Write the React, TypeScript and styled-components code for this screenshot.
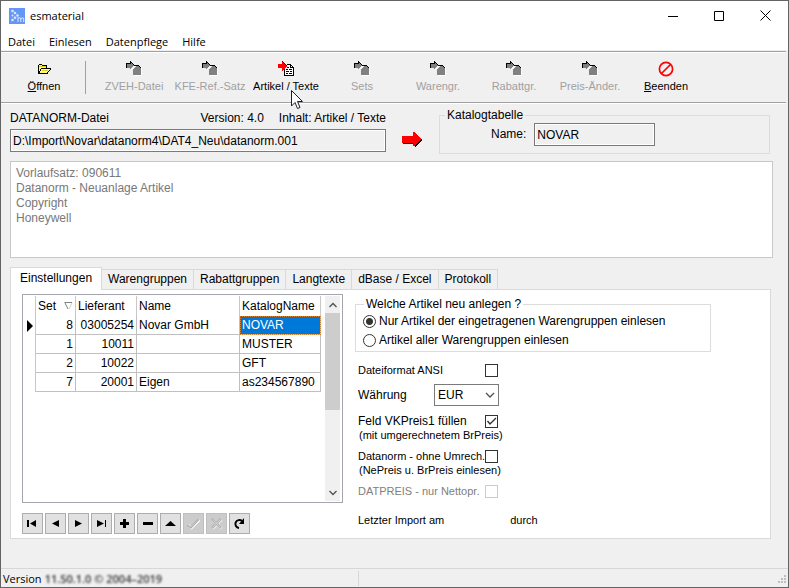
import React, { useState } from "react";
import styled, { createGlobalStyle, css } from "styled-components";

const GlobalStyle = createGlobalStyle`
  *, *::before, *::after { box-sizing: border-box; }
  body {
    margin: 0;
    background: #f0f0f0;
    color: #000;
    font-family: "Liberation Sans", Arial, sans-serif;
    font-size: 12px;
    line-height: 15px;
  }
  button, input, select { font: inherit; color: inherit; margin: 0; }
`;

const Window = styled.div`
  min-height: 100vh;
  display: flex;
  flex-direction: column;
  border: 1px solid #646464;
  background: #f0f0f0;
`;

const TitleBar = styled.header`
  display: flex;
  align-items: center;
  height: 29px;
  padding-left: 8px;
  background: #fff;
  font-family: "Open Sans", sans-serif;
  font-size: 11px;
`;

const Title = styled.h1`
  flex: 1;
  margin: 0 0 0 5px;
  font-size: 11px;
  font-weight: 400;
`;

const CaptionButton = styled.button`
  display: grid;
  place-items: center;
  width: 46px;
  height: 28px;
  padding: 0;
  border: 0;
  background: transparent;
`;

const MenuBar = styled.nav`
  display: flex;
  gap: 14px;
  height: 20px;
  padding: 3px 7px 0;
  background: #fff;
  font-family: "Open Sans", sans-serif;
  font-size: 11px;
`;

const MenuItem = styled.button`
  padding: 0;
  border: 0;
  background: transparent;
  line-height: 16px;
`;

const ToolBar = styled.div`
  display: flex;
  align-items: center;
  height: 52px;
  margin: 1px 2px 0 0;
  padding-left: 5px;
  border-top: 1px solid #a0a0a0;
  border-bottom: 1px solid #a0a0a0;
  box-shadow: inset 0 1px #fff, 0 1px #fff;
`;

const ToolButton = styled.button`
  position: relative;
  display: flex;
  flex-direction: column;
  align-items: center;
  gap: 2px;
  width: 76px;
  padding: 0;
  border: 0;
  background: transparent;
  font-size: 11px;
  line-height: 15px;
  white-space: nowrap;
  &:disabled { color: #a0a0a0; }
  svg { display: block; }
`;

const Pointer = styled.svg`
  position: absolute;
  left: 43px;
  top: 29px;
  z-index: 2;
`;

const ToolSeparator = styled.span`
  width: 1px;
  height: 33px;
  margin: 0 10px 0 3px;
  background: #a0a0a0;
`;

const Source = styled.section`
  display: flex;
  align-items: flex-start;
  padding: 8px 18px 0 9px;
`;

const FileColumn = styled.div`
  width: 376px;
`;

const FileLabels = styled.div`
  display: flex;
  align-items: flex-start;
  justify-content: space-between;
  height: 18px;
`;

const FileInfo = styled.div`
  display: flex;
  gap: 15px;
`;

const ReadField = styled.input<{ $width?: number }>`
  width: ${(p) => (p.$width ? `${p.$width}px` : "100%")};
  height: 23px;
  padding: 0 2px;
  border: 1px solid #7a7a7a;
  box-shadow: inset 0 0 0 1px #fff;
  background: #f0f0f0;
  outline: 0;
`;

const ArrowSlot = styled.div`
  width: 53px;
  padding: 20px 0 0 16px;
  svg { display: block; }
`;

const Group = styled.fieldset`
  flex: 1;
  min-width: 0;
  margin: 0;
  border: 1px solid #dcdcdc;
`;

const GroupLegend = styled.legend`
  padding: 0 2px;
`;

const CatalogGroup = styled(Group)`
  height: 46px;
  margin-top: -3px;
  padding: 0 0 0 51px;
  ${GroupLegend} { margin-left: -46px; }
`;

const NameRow = styled.label`
  display: flex;
  align-items: center;
  gap: 8px;
`;

const Memo = styled.section`
  height: 97px;
  margin: 7px 15px 0 9px;
  padding: 4px 5px;
  border: 1px solid #c8c8c8;
  background: #fff;
  color: #787878;
  line-height: 15px;
`;

const TabStrip = styled.div`
  display: flex;
  align-items: flex-end;
  height: 31px;
  margin: 0 17px 0 9px;
`;

const Tab = styled.button<{ $active: boolean }>`
  height: 20px;
  padding: 0 6px;
  border: 1px solid #d9d9d9;
  border-left-width: 0;
  border-bottom: 0;
  background: #f0f0f0;
  white-space: nowrap;
  ${(p) =>
    p.$active &&
    css`
      position: relative;
      z-index: 1;
      height: 23px;
      margin-bottom: -1px;
      padding: 0 9px 2px;
      border-left-width: 1px;
      background: #fff;
    `}
`;

const TabPanel = styled.main`
  flex: 1;
  display: flex;
  align-items: stretch;
  margin: 0 17px 29px 9px;
  padding: 4px 59px 4px 11px;
  border: 1px solid #d9d9d9;
  background: #fff;
`;

const GridColumn = styled.div`
  display: flex;
  flex-direction: column;
  width: 321px;
  margin-right: 12px;
`;

const GridFrame = styled.div`
  flex: 1;
  display: flex;
  justify-content: space-between;
  align-items: flex-start;
  min-height: 180px;
  padding: 1px 2px 1px 1px;
  border: 1px solid #a5a5ad;
`;

const Table = styled.table`
  width: 297px;
  table-layout: fixed;
  border-collapse: separate;
  border-spacing: 0;
  line-height: 15px;
`;

const HeadCell = styled.th<{ $width: number }>`
  width: ${(p) => p.$width}px;
  height: 20px;
  padding: 0 2px;
  border-right: 1px solid #c8c8c8;
  text-align: left;
  font-weight: 400;
  white-space: nowrap;
`;

const SortLabel = styled.span`
  display: flex;
  align-items: center;
  justify-content: space-between;
`;

const Cell = styled.td<{ $right?: boolean; $selected?: boolean }>`
  height: 19px;
  padding: 0 2px;
  border-right: 1px solid #c0c0c0;
  border-bottom: 1px solid #c0c0c0;
  text-align: ${(p) => (p.$right ? "right" : "left")};
  white-space: nowrap;
  ${(p) =>
    p.$selected &&
    css`
      background: #0078d7;
      color: #fff;
      outline: 1px dotted #d08030;
      outline-offset: -1px;
    `}
`;

const MarkerCell = styled.td`
  padding: 0 0 0 3px;
  border-right: 1px solid #c8c8c8;
  svg { display: block; }
`;

const ScrollBar = styled.div`
  align-self: stretch;
  display: flex;
  flex-direction: column;
  width: 15px;
  background: #f0f0f0;
`;

const ScrollButton = styled.button`
  display: grid;
  place-items: center;
  height: 17px;
  padding: 0;
  border: 0;
  background: #f0f0f0;
`;

const ScrollTrack = styled.div`
  flex: 1;
`;

const ScrollThumb = styled.div`
  height: 97px;
  background: #cdcdcd;
`;

const Navigator = styled.div`
  display: flex;
  gap: 2px;
  margin-top: 10px;
`;

const NavButton = styled.button`
  display: grid;
  place-items: center;
  width: 21px;
  height: 21px;
  padding: 0;
  border: 1px solid #adadad;
  background: #e1e1e1;
  &:disabled { border-color: #bfbfbf; background: #ccc; }
`;

const Options = styled.form`
  flex: 1;
  min-width: 0;
`;

const ChoiceGroup = styled(Group)`
  height: 55px;
  margin-top: 3px;
  padding: 0 0 0 7px;
  ${GroupLegend} { margin-left: 1px; }
`;

const RadioRow = styled.label`
  display: flex;
  align-items: center;
  gap: 3px;
  height: 19px;
  white-space: nowrap;
`;

const Radio = styled.input`
  appearance: none;
  width: 13px;
  height: 13px;
  border: 1px solid #333;
  border-radius: 50%;
  background: #fff;
  &:checked { background: radial-gradient(circle, #333 3px, #fff 4px); }
`;

const Settings = styled.div`
  display: flex;
  flex-direction: column;
  width: 143px;
  padding: 11px 0 0 3px;
`;

const SettingRow = styled.label<{ $small?: boolean; $top?: number; $muted?: boolean }>`
  display: flex;
  align-items: center;
  justify-content: space-between;
  height: 14px;
  margin-top: ${(p) => p.$top ?? 0}px;
  font-size: ${(p) => (p.$small ? 11 : 12)}px;
  color: ${(p) => (p.$muted ? "#808080" : "#000")};
  white-space: nowrap;
`;

const Note = styled.div`
  height: 14px;
  padding-left: 1px;
  font-size: 11px;
  line-height: 14px;
  white-space: nowrap;
`;

const CheckFrame = styled.span`
  display: grid;
  width: 13px;
  height: 13px;
  > * { grid-area: 1 / 1; }
  svg { pointer-events: none; }
`;

const Check = styled.input`
  appearance: none;
  width: 13px;
  height: 13px;
  border: 1px solid #333;
  background: #fff;
  &:disabled { border-color: #ccc; }
  & + svg { visibility: hidden; }
  &:checked + svg { visibility: visible; }
`;

const SelectFrame = styled.span`
  display: grid;
  align-items: center;
  width: 65px;
  margin-right: -1px;
  > * { grid-area: 1 / 1; }
  svg { justify-self: end; margin-right: 4px; pointer-events: none; }
`;

const Select = styled.select`
  appearance: none;
  width: 100%;
  height: 22px;
  padding: 0 3px;
  border: 1px solid #7a7a7a;
  border-radius: 0;
  background: #fff;
`;

const ImportLine = styled.div`
  display: flex;
  gap: 66px;
  margin-top: 15px;
  font-size: 11px;
  line-height: 14px;
  white-space: nowrap;
`;

const StatusBar = styled.footer`
  display: flex;
  align-items: center;
  justify-content: space-between;
  height: 19px;
  border-top: 1px solid #d7d7d7;
  padding: 1px 2px 0 2px;
  font-family: "Open Sans", sans-serif;
  font-size: 11px;
`;

const StatusCell = styled.div`
  display: flex;
  gap: 3px;
  width: 356px;
  border-right: 1px solid #d7d7d7;
`;

const Obscured = styled.span`
  color: #333;
  font-weight: 600;
  filter: blur(1px);
`;

function AppIcon() {
  return (
    <svg width="16" height="16" viewBox="0 0 16 16">
      <rect width="16" height="16" fill="#6496f5" />
      <g fill="#dce8ff">
        <circle cx="3.5" cy="3" r="1.3" />
        <circle cx="6" cy="5" r="1.3" />
        <circle cx="8.5" cy="7.5" r="1.3" />
        <circle cx="6" cy="9.8" r="1.3" />
        <circle cx="3.5" cy="12" r="1.3" />
        <circle cx="3.5" cy="7.5" r="1" />
      </g>
      <path d="M9 14V9.5M9 10.5Q11.5 8.5 11.8 11V14M11.8 11Q14.5 8.5 14.7 11V14" fill="none" stroke="#dce8ff" />
    </svg>
  );
}

function OpenIcon() {
  return (
    <svg width="16" height="16" viewBox="0 0 16 16" shapeRendering="crispEdges">
      <path d="M2 12V4L3 3H6L7 4H11V7H15V8L11 12Z" fill="#ffff78" />
      <path d="M3 3h3v1H3zM2 4h1v8H2zM6 4h5v1H6zM10 5h1v2h-1zM5 7h10v1H5zM4 8h1v2H4zM3 10h1v2H3zM14 8h1v1h-1zM13 9h1v1h-1zM12 10h1v1h-1zM11 11h1v1h-1zM2 12h10v1H2z" />
      <path d="M3 5h7v1H3zM6 9h6v1H6z" fill="#e0d020" />
    </svg>
  );
}

function ImportIcon() {
  return (
    <svg width="16" height="16" viewBox="0 0 16 16" shapeRendering="crispEdges">
      <path d="M8 14h8v1H8zM15 6h1v9h-1z" fill="#fff" />
      <path d="M7 14V8h1V7h1V6h1V5h3v1h1v1h1v7z" fill="#808080" />
      <path d="M0 3h4V1h1v1h1v1h1v1h1v1H7v1H6v1H5v1H4V7H0z" fill="#808080" />
      <path d="M0 2h4v1H0zM0 3h1v4H0zM4 0h1v3H4zM5 1h1v1H5zM6 2h1v1H6zM7 3h1v1H7zM8 4h5v1H8zM13 5h1v1h-1zM14 6h1v1h-1z" />
      <path d="M8 5h1v1H8zM7 6h1v1H7zM6 7h1v1H6zM5 8h1v1H5z" fill="#fff" />
    </svg>
  );
}

function ArticleIcon() {
  return (
    <svg width="16" height="16" viewBox="0 0 16 16" shapeRendering="crispEdges">
      <path d="M6 3H13L16 6V15H6Z" fill="#fff" />
      <path d="M9 3h4v1H9zM6 8h1v6H6zM6 14h10v1H6zM15 6h1v9h-1zM12 4h1v3h-1zM13 4h1v1h-1zM14 5h1v1h-1zM13 6h2v1h-2zM9 6h2v1H9zM8 8h2v1H8zM11 8h3v1h-3zM8 10h3v1H8zM12 10h2v1h-2zM8 12h2v1H8zM11 12h3v1h-3z" />
      <path d="M0 3h4V1h1v1h1v1h1v1h1v1h1v1H8v1H7v1H6v1H5v1H4V7H0z" fill="#f00" />
      <path d="M4 0h1v1H4zM5 1h1v1H5zM6 2h1v1H6zM7 3h1v1H7zM8 4h1v1H8z" fill="#700" />
    </svg>
  );
}

function QuitIcon() {
  return (
    <svg width="16" height="16" viewBox="0 0 16 16">
      <g fill="none" stroke="#f00" strokeWidth="1.7">
        <circle cx="8" cy="8" r="6.6" />
        <path d="M3.5 12.5L12.5 3.5" />
      </g>
    </svg>
  );
}

function ArrowIcon() {
  return (
    <svg width="21" height="18" viewBox="0 0 21 18" shapeRendering="crispEdges">
      <path d="M1 6H13V2L20 9L13 17V13H1Z" fill="#200" />
      <path d="M0 5H11V1H12L19 8L12 15H11V12H0Z" fill="#f00" />
    </svg>
  );
}

function Chevron({ d }: { d: string }) {
  return (
    <svg width="10" height="8" viewBox="0 0 10 8">
      <path d={d} fill="none" stroke="#505050" strokeWidth="1.3" />
    </svg>
  );
}

const tools = [
  { label: "ZVEH-Datei" },
  { label: "KFE-Ref.-Satz" },
  { label: "Artikel / Texte", active: true },
  { label: "Sets" },
  { label: "Warengr." },
  { label: "Rabattgr." },
  { label: "Preis-Änder." },
];

const tabs = ["Einstellungen", "Warengruppen", "Rabattgruppen", "Langtexte", "dBase / Excel", "Protokoll"];

const rows = [
  ["8", "03005254", "Novar GmbH", "NOVAR"],
  ["1", "10011", "", "MUSTER"],
  ["2", "10022", "", "GFT"],
  ["7", "20001", "Eigen", "as234567890"],
];

const navItems = [
  { name: "Erster", shape: <path d="M2 4h2v7H2zM11 4v7L5 7.5z" /> },
  { name: "Zurück", shape: <path d="M11 4v7L4 7.5z" /> },
  { name: "Weiter", shape: <path d="M4 4v7l7-3.5z" /> },
  { name: "Letzter", shape: <path d="M3 4v7l7-3.5zM11 4h1v7h-1z" /> },
  { name: "Einfügen", shape: <path d="M6 3h3v3h3v3H9v3H6V9H3V6h3z" /> },
  { name: "Löschen", shape: <path d="M3 6h10v3H3z" /> },
  { name: "Bearbeiten", shape: <path d="M2 10h11L7.5 5z" /> },
  {
    name: "Übernehmen",
    disabled: true,
    shape: (
      <g fill="none">
        <path d="M2 8.5L5.500 12L13.500 4" stroke="#fff" strokeWidth="2.4" />
        <path d="M1.500 9L5 11.500L12.500 3.500" stroke="#aaa" strokeWidth="2" />
        <path d="M2 9L5 11L12.500 4" stroke="#ccc" strokeWidth="1" />
      </g>
    ),
  },
  {
    name: "Verwerfen",
    disabled: true,
    shape: (
      <g fill="none">
        <path d="M3.500 3.500L12.500 12.500M12.500 3.500L3.500 12.500" stroke="#fff" strokeWidth="3" />
        <path d="M3 3L12 12M12 3L3 12" stroke="#aaa" strokeWidth="2.600" />
        <path d="M3.500 3.500L11.500 11.500M11.500 3.500L3.500 11.500" stroke="#ccc" strokeWidth="1.200" />
      </g>
    ),
  },
  {
    name: "Aktualisieren",
    shape: (
      <g>
        <path d="M7 12A4 4 0 1 1 10 5" fill="none" stroke="#000" strokeWidth="2" />
        <path d="M12 2v6H7z" />
      </g>
    ),
  },
];

function CheckBox(props: React.InputHTMLAttributes<HTMLInputElement>) {
  return (
    <CheckFrame>
      <Check type="checkbox" {...props} />
      <svg width="13" height="13" viewBox="0 0 13 13">
        <path d="M2.5 6L5 9L11 3" fill="none" stroke="#333" strokeWidth="1.4" />
      </svg>
    </CheckFrame>
  );
}

export default function App() {
  const [tab, setTab] = useState(tabs[0]);
  return (
    <>
      <GlobalStyle />
      <Window>
        <TitleBar>
          <AppIcon />
          <Title>esmaterial</Title>
          <CaptionButton aria-label="Minimieren">
            <svg width="10" height="10"><path d="M0 5.5H10" stroke="#000" /></svg>
          </CaptionButton>
          <CaptionButton aria-label="Maximieren">
            <svg width="10" height="10"><path d="M.5.5H9.500V9.500H.5Z" fill="none" stroke="#000" /></svg>
          </CaptionButton>
          <CaptionButton aria-label="Schließen">
            <svg width="11" height="11"><path d="M.5.5L10.500 10.500M10.500.5L.5 10.500" stroke="#000" /></svg>
          </CaptionButton>
        </TitleBar>

        <MenuBar>
          {["Datei", "Einlesen", "Datenpflege", "Hilfe"].map((m) => (
            <MenuItem key={m}>{m}</MenuItem>
          ))}
        </MenuBar>

        <ToolBar>
          <ToolButton><OpenIcon /><span><u>Ö</u>ffnen</span></ToolButton>
          <ToolSeparator />
          {tools.map((t) => (
            <ToolButton key={t.label} disabled={!t.active}>
              {t.active ? <ArticleIcon /> : <ImportIcon />}
              <span>{t.label}</span>
              {t.active && (
                <Pointer width="13" height="20" viewBox="0 0 13 20">
                  <path d="M.5.5V16L4 12.500L6.500 18.500L9 17.500L6.500 11.500H11.500Z" fill="#fff" stroke="#1c2030" />
                </Pointer>
              )}
            </ToolButton>
          ))}
          <ToolButton><QuitIcon /><span><u>B</u>eenden</span></ToolButton>
        </ToolBar>

        <Source>
          <FileColumn>
            <FileLabels>
              <label htmlFor="file">DATANORM-Datei</label>
              <FileInfo><span>Version: 4.0</span><span>Inhalt: Artikel / Texte</span></FileInfo>
            </FileLabels>
            <ReadField id="file" readOnly value="D:\Import\Novar\datanorm4\DAT4_Neu\datanorm.001" />
          </FileColumn>
          <ArrowSlot><ArrowIcon /></ArrowSlot>
          <CatalogGroup>
            <GroupLegend>Katalogtabelle</GroupLegend>
            <NameRow>Name:<ReadField $width={121} readOnly value="NOVAR" /></NameRow>
          </CatalogGroup>
        </Source>

        <Memo>
          <div>Vorlaufsatz: 090611</div>
          <div>Datanorm - Neuanlage Artikel</div>
          <div>Copyright</div>
          <div>Honeywell</div>
        </Memo>

        <TabStrip role="tablist">
          {tabs.map((t) => (
            <Tab key={t} role="tab" aria-selected={t === tab} $active={t === tab} onClick={() => setTab(t)}>
              {t}
            </Tab>
          ))}
        </TabStrip>

        <TabPanel role="tabpanel">
          <GridColumn>
            <GridFrame>
              <Table>
                <thead>
                  <tr>
                    <HeadCell $width={12} />
                    <HeadCell $width={40}>
                      <SortLabel>
                        Set
                        <svg width="9" height="8"><path d="M.5.5H8M1 1L4 7" fill="none" stroke="#808080" /><path d="M8 1L5 7" stroke="#d0d0d0" /></svg>
                      </SortLabel>
                    </HeadCell>
                    <HeadCell $width={61}>Lieferant</HeadCell>
                    <HeadCell $width={103}>Name</HeadCell>
                    <HeadCell $width={81}>KatalogName</HeadCell>
                  </tr>
                </thead>
                <tbody>
                  {rows.map((r, i) => (
                    <tr key={r[0]}>
                      <MarkerCell>
                        {i === 0 && <svg width="7" height="12"><path d="M0 0V12L6 6Z" /></svg>}
                      </MarkerCell>
                      <Cell $right>{r[0]}</Cell>
                      <Cell $right>{r[1]}</Cell>
                      <Cell>{r[2]}</Cell>
                      <Cell $selected={i === 0}>{r[3]}</Cell>
                    </tr>
                  ))}
                </tbody>
              </Table>
              <ScrollBar>
                <ScrollButton aria-label="Nach oben"><Chevron d="M1.500 6L5 2.500L8.500 6" /></ScrollButton>
                <ScrollTrack><ScrollThumb /></ScrollTrack>
                <ScrollButton aria-label="Nach unten"><Chevron d="M1.500 2L5 5.500L8.500 2" /></ScrollButton>
              </ScrollBar>
            </GridFrame>
            <Navigator>
              {navItems.map((n) => (
                <NavButton key={n.name} aria-label={n.name} disabled={n.disabled}>
                  <svg width="15" height="15" viewBox="0 0 15 15">{n.shape}</svg>
                </NavButton>
              ))}
            </Navigator>
          </GridColumn>

          <Options>
            <ChoiceGroup>
              <GroupLegend>Welche Artikel neu anlegen ?</GroupLegend>
              <RadioRow><Radio type="radio" name="scope" defaultChecked />Nur Artikel der eingetragenen Warengruppen einlesen</RadioRow>
              <RadioRow><Radio type="radio" name="scope" />Artikel aller Warengruppen einlesen</RadioRow>
            </ChoiceGroup>
            <Settings>
              <SettingRow $small>Dateiformat ANSI<CheckBox /></SettingRow>
              <SettingRow $top={11}>
                Währung
                <SelectFrame>
                  <Select defaultValue="EUR"><option>EUR</option></Select>
                  <Chevron d="M1 2L5 6L9 2" />
                </SelectFrame>
              </SettingRow>
              <SettingRow $top={12}>Feld VKPreis1 füllen<CheckBox defaultChecked /></SettingRow>
              <Note>(mit umgerechnetem BrPreis)</Note>
              <SettingRow $small $top={7}>Datanorm - ohne Umrech.<CheckBox /></SettingRow>
              <Note>(NePreis u. BrPreis einlesen)</Note>
              <SettingRow $small $muted $top={7}>DATPREIS - nur Nettopr.<CheckBox disabled /></SettingRow>
              <ImportLine><span>Letzter Import am</span><span>durch</span></ImportLine>
            </Settings>
          </Options>
        </TabPanel>

        <StatusBar>
          <StatusCell><span>Version</span><Obscured>11.50.1.0 © 2004–2019</Obscured></StatusCell>
          <svg width="8" height="8" viewBox="0 0 8 8" fill="#bfbfbf">
            <path d="M6 0h2v2H6zM3 3h2v2H3zM6 3h2v2H6zM0 6h2v2H0zM3 6h2v2H3zM6 6h2v2H6z" />
          </svg>
        </StatusBar>
      </Window>
    </>
  );
}
